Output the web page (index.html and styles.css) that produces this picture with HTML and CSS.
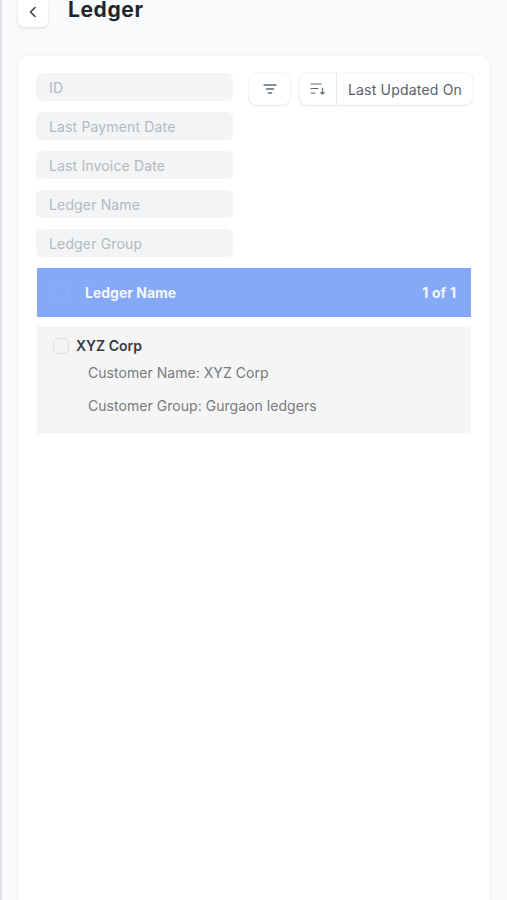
FILE: index.html
```html
<!doctype html>
<html lang="en">

<head>
  <meta charset="UTF-8" />
  <meta name="viewport" content="width=device-width, initial-scale=1.0" />
  <title>Ledger</title>
  <link rel="stylesheet" href="styles.css">
</head>

<body>
  <div class="page">
    <div class="page-head">
      <button class="back-btn" type="button">
        <svg width="16" height="16" viewBox="0 0 16 16" fill="none" stroke="#333c44" stroke-width="1.5"
          stroke-linecap="round" stroke-linejoin="round">
          <path d="M10 3.5L5.5 8l4.5 4.5" />
        </svg>
      </button>
      <h1>Ledger</h1>
    </div>

    <div class="card">
      <div class="filters">
        <div class="filter-fields">
          <div class="field">ID</div>
          <div class="field">Last Payment Date</div>
          <div class="field">Last Invoice Date</div>
          <div class="field">Ledger Name</div>
          <div class="field">Ledger Group</div>
        </div>
        <div class="filter-actions">
          <button class="btn btn-icon" type="button">
            <svg width="14" height="12" viewBox="0 0 14 12" fill="none" stroke="#5f6b76" stroke-width="1.3"
              stroke-linecap="round">
              <path d="M1 2h12M3.5 6h7M5.5 10h3" />
            </svg>
          </button>
          <div class="sort-group">
            <button class="sort-dir" type="button">
              <svg width="16" height="14" viewBox="0 0 16 14" fill="none" stroke="#5f6b76" stroke-width="1.2"
                stroke-linecap="round" stroke-linejoin="round">
                <path d="M1 2h10M1 6.500h7M1 11h4M12.500 6v6M10.800 10.500l1.700 1.700 1.700-1.700" />
              </svg>
            </button>
            <button class="sort-field" type="button">Last Updated On</button>
          </div>
        </div>
      </div>

      <div class="list-head">
        <span class="check check-head"></span>
        <span class="list-title">Ledger Name</span>
        <span class="list-count">1 of 1</span>
      </div>

      <div class="list-row">
        <div class="row-title">
          <span class="check"></span>
          <span class="row-name">XYZ Corp</span>
        </div>
        <div class="row-line">Customer Name: XYZ Corp</div>
        <div class="row-line">Customer Group: Gurgaon ledgers</div>
      </div>
    </div>
  </div>
</body>

</html>
```

FILE: styles.css
```css
* {
  box-sizing: border-box;
}

html,
body {
  height: 100%;
}

body {
  margin: 0;
  background-color: #f9fafc;
  border-left: 2px solid #dfe2e6;
  font-family: 'Inter', sans-serif;
  overflow: hidden;
}

.page {
  height: 900px;
  padding-left: 16px;
  padding-right: 18px;
}

.page-head {
  display: flex;
  align-items: flex-start;
  gap: 20px;
  height: 56px;
}

.back-btn {
  width: 30px;
  height: 27px;
  padding: 0 0 3px;
  display: flex;
  align-items: center;
  justify-content: center;
  background-color: #fff;
  border: none;
  border-radius: 0 0 6px 6px;
  box-shadow: 0 1px 3px rgba(0, 0, 0, 0.13);
}

h1 {
  margin: 0;
  font-size: 21px;
  line-height: 20px;
  font-weight: 700;
  letter-spacing: 0.6px;
  color: #1f272e;
}

.card {
  height: 844px;
  margin-left: 1px;
  padding: 17px 18px 0 17px;
  background-color: #fff;
  border-radius: 8px 8px 0 0;
  box-shadow: 0 0 4px rgba(0, 0, 0, 0.05);
}

.filters {
  display: flex;
  justify-content: space-between;
  height: 195px;
}

.filter-fields {
  display: flex;
  flex-direction: column;
  gap: 11px;
  width: 197px;
}

.field {
  height: 28px;
  padding-left: 13px;
  background-color: #f3f4f5;
  border-radius: 6px;
  font-size: 14px;
  line-height: 29px;
  letter-spacing: 0.15px;
  color: #b4b9be;
}

.filter-actions {
  display: flex;
  align-items: flex-start;
  gap: 9px;
  margin-right: -2px;
}

.btn,
.sort-group {
  height: 32px;
  background-color: #fff;
  border-radius: 8px;
  box-shadow: 0 0 2px rgba(0, 0, 0, 0.14), 0 1px 2px rgba(0, 0, 0, 0.06);
}

.btn,
.sort-dir,
.sort-field {
  border: none;
  background: none;
  padding: 0;
  display: flex;
  align-items: center;
  justify-content: center;
}

.btn-icon {
  width: 41px;
  background-color: #fff;
}

.sort-group {
  display: flex;
  width: 174px;
}

.sort-dir {
  width: 38px;
  border-right: 1px solid #e6e8ea;
}

.sort-field {
  flex: 1;
  font-family: 'Inter', sans-serif;
  font-size: 14px;
  letter-spacing: 0.2px;
  color: #566370;
}

.list-head {
  display: flex;
  align-items: center;
  height: 49px;
  margin-left: 1px;
  padding: 0 10px 0 16px;
  background-color: #86a9f7;
  color: #f2f6ff;
  font-size: 14px;
  font-weight: 700;
}

.check {
  display: block;
  flex: none;
  width: 16px;
  height: 16px;
  background-color: #f5f5f6;
  border: 1.500px solid #dcdfe2;
  border-radius: 5px;
}

.check-head {
  background-color: #86a9f7;
  border-color: #8fafef;
}

.list-title {
  margin-left: 16px;
}

.list-count {
  margin-left: auto;
  margin-right: 5px;
  word-spacing: 0.5px;
}

.list-row {
  height: 108px;
  margin-top: 9px;
  margin-left: 1px;
  padding: 11px 16px 0;
  background-color: #f5f5f5;
  font-size: 14px;
  letter-spacing: 0.04px;
  color: #767b80;
}

.row-title {
  display: flex;
  align-items: center;
  gap: 7px;
  margin-bottom: 9px;
}

.row-name {
  font-size: 14px;
  font-weight: 600;
  letter-spacing: 0;
  color: #333c44;
}

.row-line {
  padding-left: 35px;
  line-height: 20px;
  margin-bottom: 13px;
}
```
